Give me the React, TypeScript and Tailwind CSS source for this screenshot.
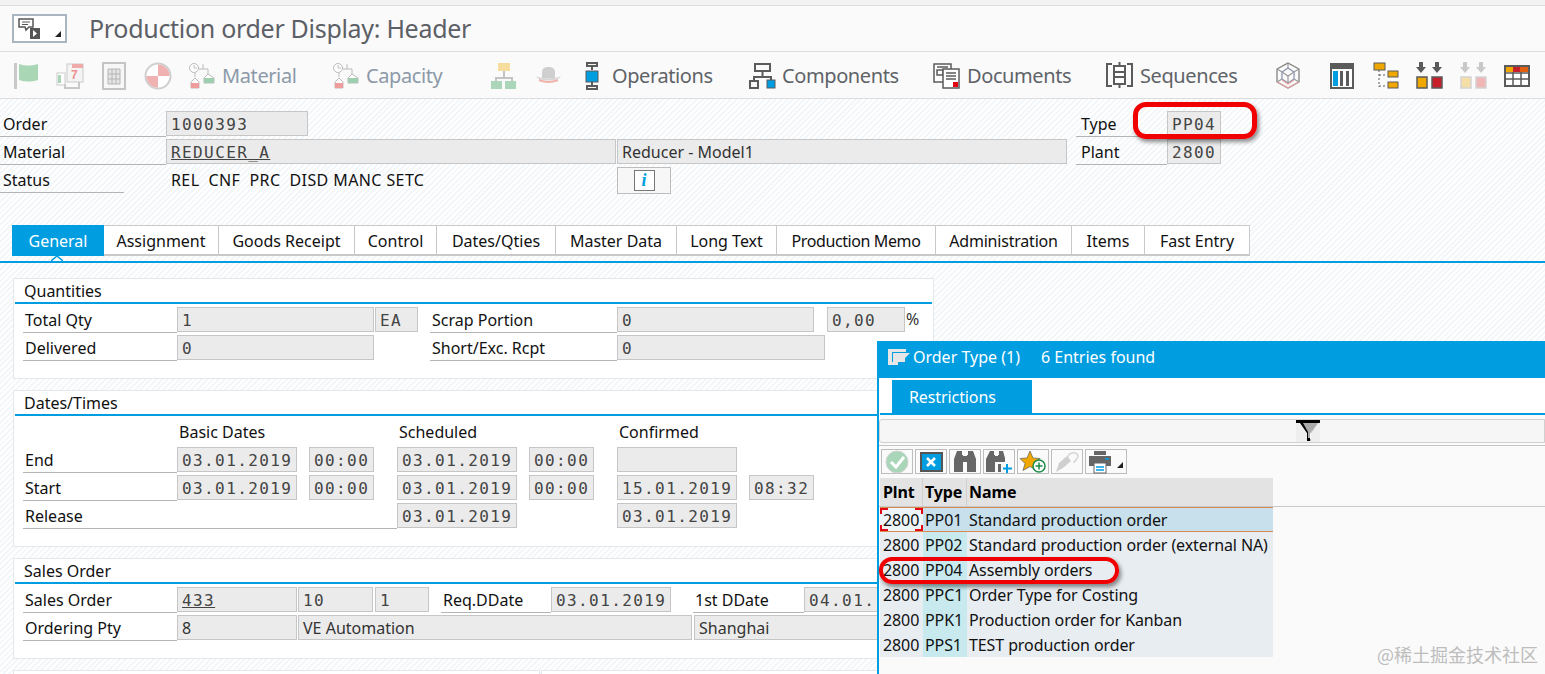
import React from 'react';

const sans = "font-['Noto_Sans',sans-serif]";
const hatch = 'bg-[repeating-linear-gradient(135deg,#ffffff_0px,#ffffff_2px,#f4f7fa_2px,#f4f7fa_4px)]';

type BoxProps = { className?: string; children?: React.ReactNode };

const Field: React.FC<BoxProps & { text?: boolean }> = ({ className = '', children, text }) => (
  <div
    className={`h-[25px] shrink-0 bg-[#ebebeb] border border-[#c6c6c6] flex items-center px-[4px] whitespace-nowrap overflow-hidden text-[#333] ${
      text ? 'text-[16px]' : "font-['DejaVu_Sans_Mono',monospace] text-[16px] tracking-[1.4px] text-[#444] pt-[2px]"
    } ${className}`}
  >
    {children}
  </div>
);

const Label: React.FC<BoxProps> = ({ className = '', children }) => (
  <div className={`h-[26px] shrink-0 border-b border-[#b4b4b4] flex items-center px-[2px] text-[16px] text-[#111] whitespace-nowrap ${className}`}>
    {children}
  </div>
);

const Row: React.FC<BoxProps> = ({ className = '', children }) => <div className={`flex h-[28px] ${className}`}>{children}</div>;

const Group: React.FC<BoxProps & { title: string }> = ({ title, className = '', children }) => (
  <section className={`border border-[#e4e8eb] bg-white ml-[13px] px-[1px] w-[921px] ${className}`}>
    <div className="h-[23px] pl-[9px] flex items-center text-[16px] text-[#111] border-b-2 border-[#009de0] box-content">{title}</div>
    <div className="pt-[3px] pl-[8px]">{children}</div>
  </section>
);

const Flag = () => (
  <svg width="24" height="28" viewBox="0 0 24 28">
    <rect x="0" y="1" width="3" height="26" fill="#c9c9c9" />
    <path d="M5 2c6 2 12 2 19 0v16c-7 2-13 2-19 0z" fill="#a9d6b4" />
  </svg>
);
const CalendarIcon = () => (
  <svg width="28" height="28" viewBox="0 0 28 28">
    <rect x="1" y="11" width="8" height="12" fill="#fff" stroke="#c9c9c9" />
    <rect x="2" y="13" width="3" height="8" fill="#a9d6b4" />
    <path d="M9 22v4h14v-6" fill="none" stroke="#c9c9c9" strokeWidth="2" />
    <rect x="11" y="2" width="16" height="18" fill="#f4f4f4" stroke="#c9c9c9" />
    <rect x="16" y="2" width="11" height="4" fill="#efaaaa" />
    <text x="15" y="17" fontSize="12" fontWeight="700" fill="#ee8f8f" fontFamily="Liberation Sans">7</text>
  </svg>
);
const GridIcon = () => (
  <svg width="24" height="28" viewBox="0 0 24 28">
    <rect x="1" y="1" width="22" height="26" fill="#f7f7f7" stroke="#c4c4c4" strokeWidth="2" />
    <path d="M6 7h12v15H6zM6 12h12M6 17h12M10 7v15M14 7v15" fill="#e5e5e5" stroke="#b4b4b4" />
  </svg>
);
const PieIcon = () => (
  <svg width="28" height="28" viewBox="0 0 28 28">
    <circle cx="14" cy="14" r="12.5" fill="#fff" stroke="#cfcfcf" strokeWidth="2" />
    <path d="M14 2.5A11.5 11.5 0 0 1 25.5 14H14z" fill="#efb1b1" />
    <path d="M14 25.5A11.5 11.5 0 0 1 2.5 14H14z" fill="#efb1b1" />
  </svg>
);
const CapacityIcon = () => (
  <svg width="28" height="28" viewBox="0 0 28 28">
    <circle cx="6" cy="6" r="4.5" fill="#fff" stroke="#bbb" />
    <path d="M6 3v3h3M11 7h4V2M15 7h5v5M7 11v4" fill="none" stroke="#bbb" />
    <path d="M3 26v-6l4-4 4 4v6z" fill="#fff" stroke="#bbb" />
    <rect x="3" y="21" width="8" height="5" fill="#ef9c9c" />
    <path d="M16 21v-5l4-4 6 4v5z" fill="#fff" stroke="#bbb" />
    <rect x="16" y="16" width="10" height="5" fill="#9fcfb0" />
  </svg>
);
const HierarchyIcon = () => (
  <svg width="26" height="28" viewBox="0 0 26 28">
    <rect x="7" y="1" width="12" height="8" fill="#f4dd9d" />
    <path d="M13 9v7M5 20v-4h16v4" fill="none" stroke="#c4c4c4" strokeWidth="2" />
    <rect x="0" y="19" width="11" height="8" fill="#acd6ba" />
    <rect x="14" y="19" width="11" height="8" fill="#acd6ba" />
  </svg>
);
const HatIcon = () => (
  <svg width="27" height="20" viewBox="0 0 27 20">
    <path d="M7 12V6c0-3 2-5 6.500-5S20 3 20 6v6z" fill="#cfcfcf" />
    <path d="M1 10c3 3 22 3 25 0-2 6-23 6-25 0z" fill="#d6d6d6" />
    <path d="M4 14c6 2.500 13 2.500 19 0" stroke="#efb3ab" strokeWidth="2" fill="none" />
  </svg>
);
const OperationsIcon = () => (
  <svg width="14" height="28" viewBox="0 0 14 28">
    <g fill="none" stroke="#5b5b5b" strokeWidth="2">
      <rect x="2" y="1" width="10" height="3" />
      <path d="M7 4v4M7 20v4" />
      <rect x="2" y="24" width="10" height="3" />
    </g>
    <rect x="1" y="9" width="12" height="11" fill="#009de0" stroke="#5b5b5b" />
  </svg>
);
const ComponentsIcon = () => (
  <svg width="27" height="26" viewBox="0 0 27 26">
    <g fill="none" stroke="#5b5b5b" strokeWidth="2">
      <rect x="6" y="1" width="15" height="7" />
      <path d="M13.500 8v6M5 18v-4h17v4" />
      <rect x="1" y="18" width="8" height="7" />
    </g>
    <rect x="18" y="17" width="8" height="8" fill="#009de0" stroke="#5b5b5b" />
  </svg>
);
const DocumentsIcon = () => (
  <svg width="27" height="26" viewBox="0 0 27 26">
    <g fill="#fff" stroke="#5b5b5b" strokeWidth="1.500">
      <rect x="1" y="1" width="17" height="18" />
      <path d="M4 4h11M4 7h6v5H4z" />
      <rect x="10" y="6" width="16" height="19" />
    </g>
    <path d="M13 10h10M13 13h10M13 16h10" stroke="#5b5b5b" strokeWidth="1.500" />
    <rect x="20" y="19" width="5" height="5" fill="#e30613" />
  </svg>
);
const SequencesIcon = () => (
  <svg width="27" height="28" viewBox="0 0 27 28">
    <path d="M6 2H1v22h5M21 2h5v22h-5" fill="none" stroke="#5b5b5b" strokeWidth="2" />
    <rect x="8" y="4" width="11" height="18" fill="#fff" stroke="#5b5b5b" strokeWidth="2" />
    <path d="M13.500 0v4M8 10h11M8 15h11M13.500 22v4" stroke="#5b5b5b" strokeWidth="2" />
  </svg>
);
const HexIcon = () => (
  <svg width="24" height="27" viewBox="0 0 24 27">
    <g fill="none" strokeWidth="1.200">
      <path d="M12 1l11 6v13l-11 6L1 20V7z" stroke="#777" />
      <path d="M12 6l6 4v7l-6 4-6-4v-7z" stroke="#8a8fb0" />
      <path d="M1 7l5 3M23 7l-5 3M12 1v5M6 17l-5 3M18 17l5 3M6 10l6 4 6-4M12 14v7" stroke="#999" />
      <path d="M6 18l6 4 6-4M1 20l11 6 11-6" stroke="#e0a0a0" />
    </g>
  </svg>
);
const ColumnsIcon = () => (
  <svg width="24" height="26" viewBox="0 0 24 26">
    <rect x="1" y="1" width="22" height="24" fill="#fff" stroke="#5b5b5b" strokeWidth="2" />
    <rect x="2" y="2" width="20" height="4" fill="#5b5b5b" />
    <rect x="3" y="8" width="5" height="15" fill="#009de0" />
    <rect x="10" y="8" width="3" height="15" fill="#5b5b5b" />
    <rect x="16" y="8" width="3" height="15" fill="#5b5b5b" />
  </svg>
);
const TreeIcon = () => (
  <svg width="26" height="27" viewBox="0 0 26 27">
    <rect x="1" y="1" width="11" height="7" fill="#f0a800" stroke="#5b5b5b" />
    <path d="M6 8v17M6 13h8M6 24h8" stroke="#5b5b5b" strokeDasharray="2 2" fill="none" />
    <rect x="15" y="9" width="10" height="6" fill="#f0a800" stroke="#5b5b5b" />
    <rect x="15" y="20" width="10" height="6" fill="#f0a800" stroke="#5b5b5b" />
  </svg>
);
const StackIcon: React.FC<{ left: string; right: string; arrow: string; edge: string }> = ({ left, right, arrow, edge }) => (
  <svg width="27" height="27" viewBox="0 0 27 27">
    <path d="M3 0h4v5h3l-5 6-5-6h3zM19 0h4v5h3l-5 6-5-6h3z" fill={arrow} />
    <rect x="1" y="15" width="10" height="11" fill={left} stroke={edge} strokeWidth="1.500" />
    <rect x="16" y="15" width="10" height="11" fill={right} stroke={edge} strokeWidth="1.500" />
  </svg>
);
const TableIcon = () => (
  <svg width="26" height="22" viewBox="0 0 26 22">
    <rect x="1" y="1" width="24" height="20" fill="#fff" stroke="#5b5b5b" strokeWidth="2" />
    <rect x="2" y="2" width="7" height="5" fill="#f0a800" />
    <rect x="9" y="2" width="7" height="5" fill="#c8202a" />
    <rect x="16" y="2" width="8" height="5" fill="#e06010" />
    <path d="M1 8h24M1 14h24M9 7v14M17 7v14" stroke="#5b5b5b" strokeWidth="1.500" />
  </svg>
);

const tabs = [
  { label: 'Assignment', w: 'w-[115px]' },
  { label: 'Goods Receipt', w: 'w-[136px]' },
  { label: 'Control', w: 'w-[82px]' },
  { label: 'Dates/Qties', w: 'w-[119px]' },
  { label: 'Master Data', w: 'w-[121px]' },
  { label: 'Long Text', w: 'w-[100px]' },
  { label: 'Production Memo', w: 'w-[159px] tracking-[-0.4px]' },
  { label: 'Administration', w: 'w-[136px] tracking-[-0.2px]' },
  { label: 'Items', w: 'w-[73px]' },
  { label: 'Fast Entry', w: 'w-[105px]' },
];

const rows = [
  ['PP01', 'Standard production order'],
  ['PP02', 'Standard production order (external NA)'],
  ['PP04', 'Assembly orders'],
  ['PPC1', 'Order Type for Costing'],
  ['PPK1', 'Production order for Kanban'],
  ['PPS1', 'TEST production order'],
];

const ToolBtn: React.FC<BoxProps> = ({ className = 'w-[32px]', children }) => (
  <div className={`h-[25px] border border-[#bdbdbd] bg-[#fafafa] flex items-center justify-center relative ${className}`}>{children}</div>
);

const Dialog = () => (
  <div className={`absolute left-[877px] top-[341px] w-[668px] h-[333px] border-l-2 border-[#009de0] bg-[#fafafa] text-[16px] tracking-[-0.1px] ${sans}`}>
    <div className="h-[37px] bg-[#009de0] flex items-center pl-[9px] pb-[6px] text-white tracking-normal">
      <svg width="22" height="16" viewBox="0 0 22 16">
        <path d="M0 0h18v3H4v10h6v3H0z" fill="#e6e6e6" />
        <path d="M5 4h17l-5 5v4H5z" fill="#e6e6e6" />
      </svg>
      <span className="ml-[3px]">Order Type (1)</span>
      <span className="ml-[21px]">6 Entries found</span>
    </div>
    <div className="h-[37px] bg-white pt-[2px] pl-[12px] border-b-2 border-[#009de0] ml-[1px]">
      <div className="w-[140px] h-[33px] bg-[#009de0] text-white flex items-center pl-[17px]">Restrictions</div>
    </div>
    <div className="mt-[4px] h-[24px] bg-[#f6f6f6] border border-[#d0d0d0] rounded-l-[3px] pl-[416px]">
      <svg width="24" height="22" viewBox="0 0 24 22" className="bg-[#eeeeee]">
        <path d="M0 0h24v3H0z" fill="#000" />
        <path d="M4 3h18l-7 10v8h-4v-8z" fill="#aaa" />
        <path d="M4 3l7 10v8h3v-3h-2v-6L7 3z" fill="#000" />
        <path d="M16 10l-2 4v5h1v-8z" fill="#fff" />
      </svg>
    </div>
    <div className="mt-[2px] border-t border-[#c4c4c4] h-[33px] pt-[3px] pl-[2px] flex gap-[2px]">
      <ToolBtn>
        <svg width="24" height="24" viewBox="0 0 24 24">
          <circle cx="12" cy="12" r="11" fill="#a9d6b9" stroke="#d4d4d4" />
          <path d="M6 12l5 5 8-10" fill="none" stroke="#fff" strokeWidth="3" />
        </svg>
      </ToolBtn>
      <ToolBtn>
        <div className="w-[23px] h-[20px] bg-[#009de0] border-2 border-[#555] flex items-center justify-center">
          <svg width="10" height="10" viewBox="0 0 10 10">
            <path d="M1 1l8 8M9 1L1 9" stroke="#fff" strokeWidth="2.500" />
          </svg>
        </div>
      </ToolBtn>
      <ToolBtn>
        <svg width="22" height="24" viewBox="0 0 22 24">
          <path d="M3 1h5v4h1v17H0V9zM14 1h5l3 8v13H13V5h1zM9 6h4v6H9z" fill="#666" />
        </svg>
      </ToolBtn>
      <ToolBtn>
        <svg width="28" height="24" viewBox="0 0 28 24">
          <path d="M5 1h4v4h1v17H1V9zM14 1h4l2 7v4h-7V5h1zM10 6h3v6h-3z" fill="#666" />
          <path d="M13 14h3v8h-3z" fill="#666" />
          <path d="M22 14v9M18 18.500h9" stroke="#009de0" strokeWidth="2" />
        </svg>
      </ToolBtn>
      <ToolBtn>
        <svg width="28" height="24" viewBox="0 0 28 24">
          <path d="M11 1l3 7 7 .5-5 5 2 7-7-4-7 4 2-7-5-5 7-.5z" fill="#f0a800" stroke="#5b5b5b" strokeWidth=".7" />
          <circle cx="20" cy="16" r="6" fill="#fff" stroke="#1a8a45" strokeWidth="1.500" />
          <path d="M20 12.500v7M16.500 16h7" stroke="#1a8a45" strokeWidth="1.500" />
        </svg>
      </ToolBtn>
      <ToolBtn>
        <svg width="26" height="24" viewBox="0 0 26 24">
          <path d="M2 22l3-9 8-7 4 5-8 7z" fill="#cfcfcf" />
          <path d="M14 9c-2-6 9-9 10-3 0 4-4 4-4 7" fill="none" stroke="#d4d4d4" strokeWidth="1.500" />
        </svg>
      </ToolBtn>
      <ToolBtn className="w-[42px] justify-start pl-[2px]">
        <svg width="24" height="24" viewBox="0 0 24 24">
          <path d="M6 1h12v4H6z" fill="#666" />
          <path d="M1 6h22v10H1z" fill="#666" />
          <rect x="17" y="8" width="4" height="1.500" fill="#009de0" />
          <rect x="6" y="13" width="12" height="10" fill="#fff" stroke="#666" />
          <path d="M8 17h8M8 20h8" stroke="#009de0" strokeWidth="1.500" />
        </svg>
        <div className="absolute right-[3px] bottom-[5px] w-0 h-0 border-l-[6px] border-l-transparent border-b-[6px] border-b-[#222]" />
      </ToolBtn>
    </div>
    <div className="border-b border-[#c9c9c9] h-[29px]">
      <div className="ml-[1px] w-[393px] h-[28px] bg-[#e3e3e3] flex font-bold text-[#000]">
        <div className="w-[43px] pl-[3px] border-r border-[#d0d0d0] flex items-center">Plnt</div>
        <div className="w-[44px] pl-[2px] border-r border-[#d0d0d0] flex items-center">Type</div>
        <div className="pl-[2px] flex items-center">Name</div>
      </div>
    </div>
    <div className="ml-[1px] w-[393px]">
      {rows.map(([type, name], i) => (
        <div key={type} className={`h-[25px] flex items-center text-[#111] whitespace-nowrap ${i === 0 ? 'bg-[#c8e0ec] border-y border-[#d98a4e]' : 'bg-[#e8edf1]'}`}>
          <div className={`w-[43px] h-full pl-[3px] flex items-center relative ${i === 0 ? 'bg-[#eef5f9]' : ''}`}>
            2800
            {i === 0 && (
              <>
                <div className="absolute left-0 top-0 w-[8px] h-[6px] border-l-2 border-t-2 border-[#e30613]" />
                <div className="absolute right-0 top-0 w-[8px] h-[6px] border-r-2 border-t-2 border-[#e30613]" />
                <div className="absolute left-0 bottom-0 w-[8px] h-[6px] border-l-2 border-b-2 border-[#e30613]" />
                <div className="absolute right-0 bottom-0 w-[8px] h-[6px] border-r-2 border-b-2 border-[#e30613]" />
              </>
            )}
          </div>
          <div className={`w-[44px] h-full pl-[2px] flex items-center ${i === 0 ? '' : 'bg-[#c8eaee]'}`}>{type}</div>
          <div className="pl-[2px]">{name}</div>
        </div>
      ))}
    </div>
    <div className="absolute right-[7px] bottom-[6px] text-[18px] tracking-normal text-[#bdbdbd] font-['Noto_Sans_CJK_SC',sans-serif]">@稀土掘金技术社区</div>
  </div>
);

export default function App() {
  return (
    <div className={`relative w-[1545px] h-[674px] overflow-hidden ${hatch} ${sans}`}>
      <div className="h-[6px] bg-[#f2f2f2] border-b border-[#dddddd]" />
      <header className="h-[46px] bg-[#fafafa] border-b border-[#dddddd] flex items-center pl-[12px]">
        <div className="relative w-[55px] h-[29px] border-2 border-[#a9b6c2] bg-white pl-[4px] pt-[2px]">
          <svg width="22" height="22" viewBox="0 0 22 22">
            <path d="M1 1h14v8h-4l-3 3-1-3H1z" fill="#fff" stroke="#555" strokeWidth="1.500" />
            <path d="M4 4h8M4 6.500h6" stroke="#555" />
            <rect x="12" y="10" width="10" height="11" fill="#555" />
            <path d="M15 12l4 3.500-4 3.500z" fill="#fff" />
          </svg>
          <div className="absolute right-[4px] bottom-[4px] w-0 h-0 border-l-[6px] border-l-transparent border-b-[6px] border-b-[#222]" />
        </div>
        <h1 className="ml-[22px] text-[25px] tracking-[-0.3px] text-[#5c6066]">Production order Display: Header</h1>
      </header>
      <nav className="h-[47px] bg-[#fafafa] border-b border-[#dddddd] flex items-center pl-[14px] pt-[1px] text-[20px] tracking-[-0.4px] whitespace-nowrap text-[#5f6368]">
        <Flag />
        <div className="ml-[18px]"><CalendarIcon /></div>
        <div className="ml-[18px]"><GridIcon /></div>
        <div className="ml-[18px]"><PieIcon /></div>
        <div className="ml-[16px]"><CapacityIcon /></div>
        <span className="ml-[6px] text-[#8c99a8] w-[74px]">Material</span>
        <div className="ml-[36px]"><CapacityIcon /></div>
        <span className="ml-[6px] text-[#8c99a8] w-[79px]">Capacity</span>
        <div className="ml-[46px]"><HierarchyIcon /></div>
        <div className="ml-[18px]"><HatIcon /></div>
        <div className="ml-[23px]"><OperationsIcon /></div>
        <span className="ml-[13px] w-[101px]">Operations</span>
        <div className="ml-[36px]"><ComponentsIcon /></div>
        <span className="ml-[6px] w-[116px]">Components</span>
        <div className="ml-[35px]"><DocumentsIcon /></div>
        <span className="ml-[7px] w-[104px]">Documents</span>
        <div className="ml-[35px]"><SequencesIcon /></div>
        <span className="ml-[7px] w-[100px]">Sequences</span>
        <div className="ml-[36px]"><HexIcon /></div>
        <div className="ml-[30px]"><ColumnsIcon /></div>
        <div className="ml-[19px]"><TreeIcon /></div>
        <div className="ml-[17px]"><StackIcon left="#f0a800" right="#c8202a" arrow="#5b5b5b" edge="#5b5b5b" /></div>
        <div className="ml-[17px]"><StackIcon left="#f6dfa6" right="#f0b5b5" arrow="#c9c9c9" edge="#d4d4d4" /></div>
        <div className="ml-[17px]"><TableIcon /></div>
      </nav>

      {/* header fields */}
      <div className="pt-[12px] h-[124px]">
        <Row className="relative">
          <Label className="w-[166px] pl-[3px]">Order</Label>
          <Field className="w-[142px]">1000393</Field>
          <Label className="ml-[768px] w-[91px] pl-[5px]">Type</Label>
          <Field className="w-[54px]">PP04</Field>
        </Row>
        <Row>
          <Label className="w-[166px] pl-[3px]">Material</Label>
          <Field className="w-[450px]"><span className="underline">REDUCER_A</span></Field>
          <Field text className="ml-[1px] w-[450px]">Reducer - Model1</Field>
          <Label className="ml-[9px] w-[91px] pl-[5px]">Plant</Label>
          <Field className="w-[54px]">2800</Field>
        </Row>
        <Row>
          <Label className="w-[124px] pl-[3px]">Status</Label>
          <div className="w-[493px] pl-[47px] h-[26px] flex items-center text-[16px] tracking-[0.4px] text-[#111] whitespace-pre">REL  CNF  PRC  DISD MANC SETC</div>
          <div className="w-[54px] h-[27px] border border-[#bdbdbd] bg-[#f7f7f7] flex items-center justify-center">
            <div className="w-[21px] h-[21px] bg-white border border-[#777] flex items-center justify-center text-[#009de0] text-[18px] italic font-bold font-['Liberation_Serif',serif]">i</div>
          </div>
        </Row>
      </div>

      {/* tabs */}
      <div className="relative h-[36px] pt-[2px] border-b-2 border-[#009de0] box-content">
        <div className="flex h-[31px] pl-[12px] text-[16px] text-[#111]">
          <div className="w-[92px] pt-[1px] bg-[#009de0] text-white flex items-center justify-center">General</div>
          {tabs.map(t => (
            <div key={t.label} className={`${t.w} pt-[1px] bg-white border-t border-r border-b-2 border-[#c9c9c9] flex items-center justify-center`}>
              {t.label}
            </div>
          ))}
        </div>
        <svg width="12" height="5" viewBox="0 0 12 5" className="absolute left-[51px] bottom-0">
          <path d="M0 5L6 0l6 5" fill="#fff" stroke="#009de0" strokeWidth="1.500" />
        </svg>
      </div>

      <div className="pt-[15px] flex flex-col gap-[11px]">
        <Group title="Quantities" className="h-[101px]">
          <Row>
            <Label className="w-[154px]">Total Qty</Label>
            <Field className="w-[197px]">1</Field>
            <Field className="ml-[1px] w-[43px]">EA</Field>
            <Label className="ml-[12px] w-[187px]">Scrap Portion</Label>
            <Field className="w-[197px]">0</Field>
            <Field className="ml-[13px] w-[78px]">0,00</Field>
            <span className="ml-[1px] text-[16px] text-[#333]">%</span>
          </Row>
          <Row>
            <Label className="w-[154px]">Delivered</Label>
            <Field className="w-[197px]">0</Field>
            <Label className="ml-[56px] w-[187px]">Short/Exc. Rcpt</Label>
            <Field className="w-[208px]">0</Field>
          </Row>
        </Group>

        <Group title="Dates/Times" className="h-[157px]">
          <div className="flex h-[28px] pb-[2px] items-center text-[16px] text-[#111] pl-[156px]">
            <span className="w-[220px]">Basic Dates</span>
            <span className="w-[220px]">Scheduled</span>
            <span>Confirmed</span>
          </div>
          <Row>
            <Label className="w-[154px]">End</Label>
            <Field className="w-[120px]">03.01.2019</Field>
            <Field className="ml-[12px] w-[65px]">00:00</Field>
            <Field className="ml-[23px] w-[120px]">03.01.2019</Field>
            <Field className="ml-[12px] w-[65px]">00:00</Field>
            <Field className="ml-[23px] w-[120px]" />
          </Row>
          <Row>
            <Label className="w-[154px]">Start</Label>
            <Field className="w-[120px]">03.01.2019</Field>
            <Field className="ml-[12px] w-[65px]">00:00</Field>
            <Field className="ml-[23px] w-[120px]">03.01.2019</Field>
            <Field className="ml-[12px] w-[65px]">00:00</Field>
            <Field className="ml-[23px] w-[120px]">15.01.2019</Field>
            <Field className="ml-[12px] w-[65px]">08:32</Field>
          </Row>
          <Row>
            <Label className="w-[374px]">Release</Label>
            <Field className="w-[120px]">03.01.2019</Field>
            <Field className="ml-[100px] w-[120px]">03.01.2019</Field>
          </Row>
        </Group>

        <Group title="Sales Order" className="h-[101px]">
          <Row>
            <Label className="w-[154px]">Sales Order</Label>
            <Field className="w-[120px]"><span className="underline">433</span></Field>
            <Field className="ml-[1px] w-[75px]">10</Field>
            <Field className="ml-[2px] w-[54px]">1</Field>
            <Label className="ml-[12px] w-[110px]">Req.DDate</Label>
            <Field className="w-[120px]">03.01.2019</Field>
            <Label className="ml-[22px] w-[111px]">1st DDate</Label>
            <Field className="w-[80px]">04.01.</Field>
          </Row>
          <Row>
            <Label className="w-[154px]">Ordering Pty</Label>
            <Field text className="w-[120px]">8</Field>
            <Field text className="ml-[1px] w-[394px]">VE Automation</Field>
            <Field text className="ml-[2px] w-[190px]">Shanghai</Field>
          </Row>
        </Group>

        <div className="ml-[13px] flex gap-[1px]">
          <div className="w-[527px] h-[20px] bg-white border border-[#e4e8eb]" />
          <div className="w-[393px] h-[20px] bg-white border border-[#e4e8eb]" />
        </div>
      </div>

      <Dialog />

      {/* red markers drawn over the capture */}
      <div className="absolute left-[1133px] top-[102px] w-[124px] h-[37px] border-[5px] border-[#f00000] rounded-[13px] shadow-[2px_3px_4px_rgba(0,0,0,0.45)]" />
      <div className="absolute left-[879px] top-[557px] w-[240px] h-[27px] border-[4px] border-[#f00000] rounded-[13px] shadow-[2px_3px_4px_rgba(0,0,0,0.45)]" />
    </div>
  );
}
